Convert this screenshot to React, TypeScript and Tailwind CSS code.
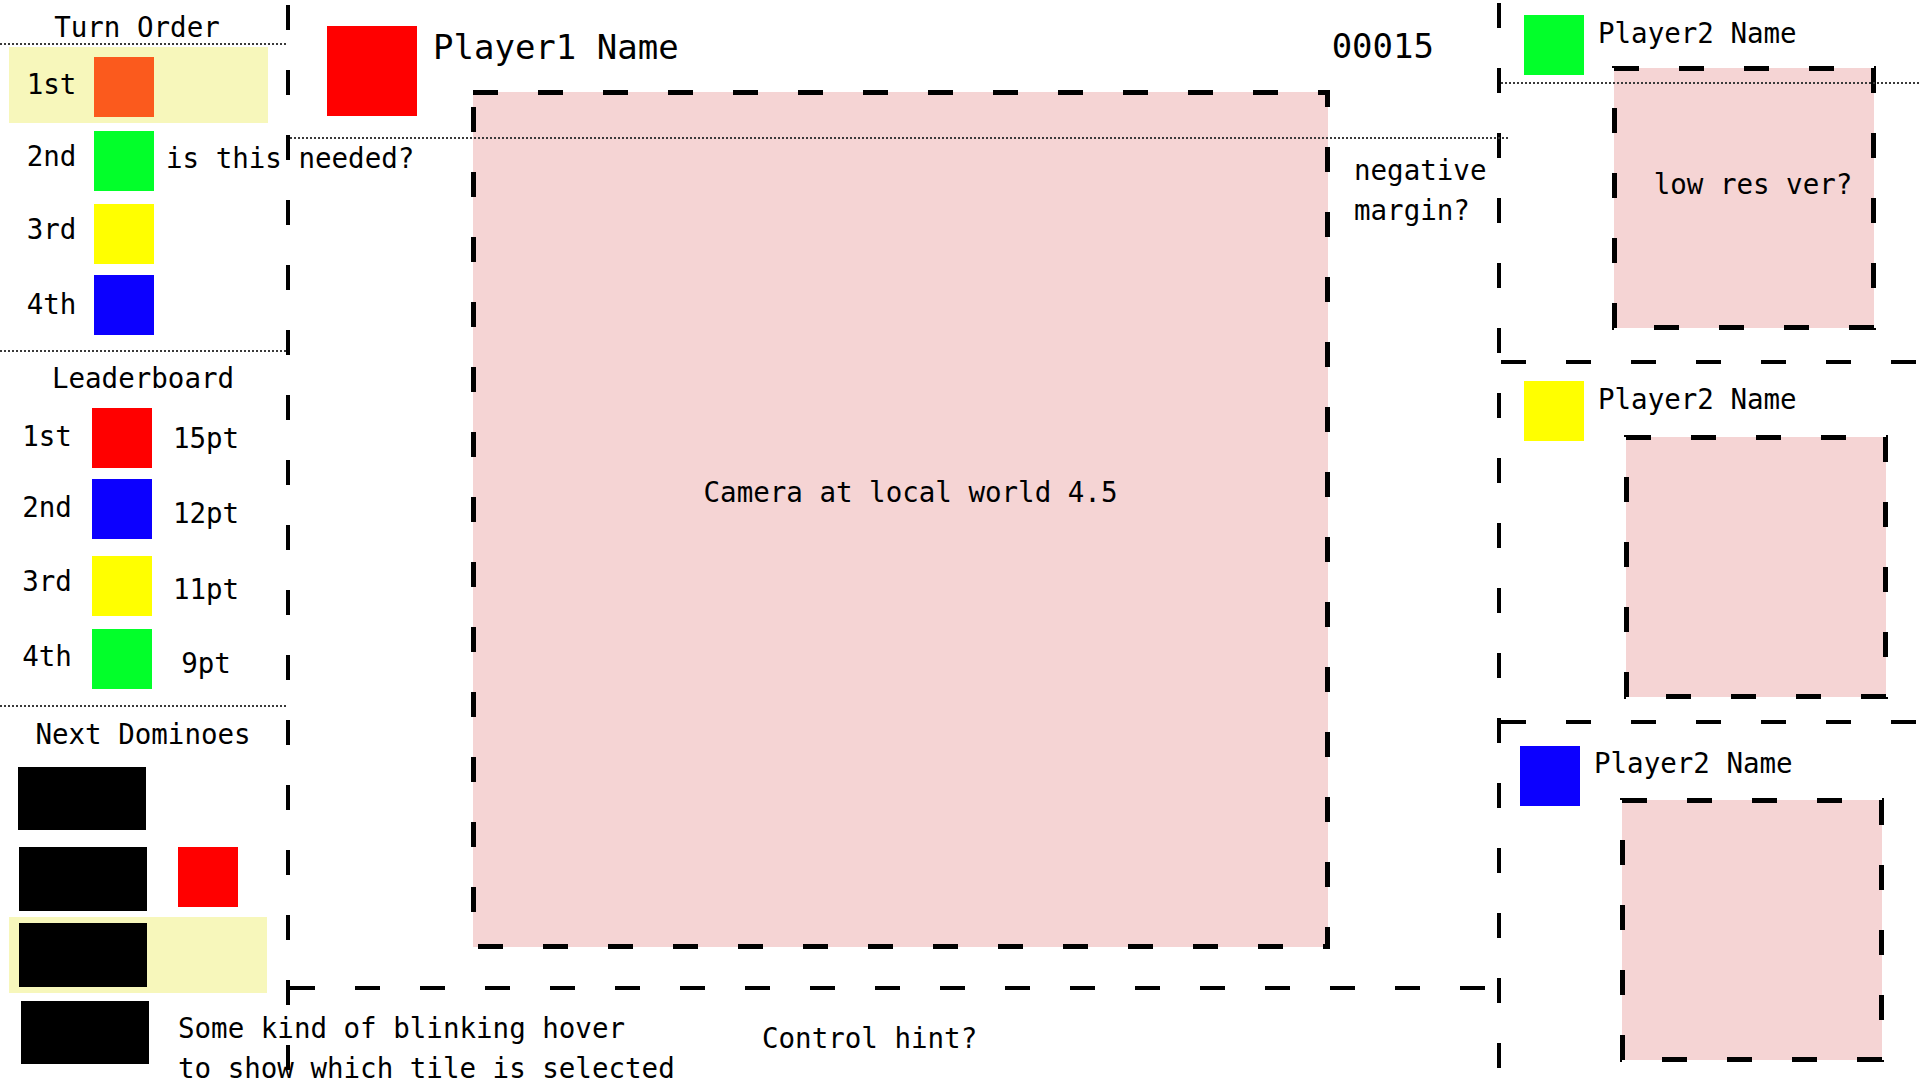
const DOTS =
    "h-[2px] [background:linear-gradient(90deg,#3a3a3a_2px,transparent_2px)_0_0/4px_2px_repeat-x]";

const MAIN_BOX =
    "w-[859px] h-[859px] shrink-0 border-2 border-transparent [background:linear-gradient(90deg,#000_25px,transparent_25px)_2px_0/65px_5px_repeat-x_border-box,linear-gradient(180deg,#000_25px,transparent_25px)_right_0_top_57px/5px_65px_repeat-y_border-box,linear-gradient(90deg,#000_25px,transparent_25px)_7px_100%/65px_5px_repeat-x_border-box,linear-gradient(180deg,#000_25px,transparent_25px)_0_17px/5px_65px_repeat-y_border-box,linear-gradient(#f5d4d4,#f5d4d4)_padding-box]";

const SMALL_BOX =
    "w-[264px] h-[264px] shrink-0 border-2 border-transparent [background:linear-gradient(90deg,#000_25px,transparent_25px)_2px_0/65px_5px_repeat-x_border-box,linear-gradient(180deg,#000_25px,transparent_25px)_right_0_top_2px/5px_65px_repeat-y_border-box,linear-gradient(90deg,#000_25px,transparent_25px)_42px_100%/65px_5px_repeat-x_border-box,linear-gradient(180deg,#000_25px,transparent_25px)_0_42px/5px_65px_repeat-y_border-box,linear-gradient(#f5d4d4,#f5d4d4)_padding-box]";

const H_DASH =
    "h-[4px] shrink-0 [background:linear-gradient(90deg,#000_25px,transparent_25px)_0_0/65px_4px_repeat-x]";

const TurnOrder = () => (
    <div className="flex flex-col">
        <div className="pt-[11px] pr-[12px] leading-[32px] text-center">Turn Order</div>
        <div className={DOTS} />

        <div className="mt-[2px] ml-[9px] w-[259px] h-[76px] bg-[#f7f7bb] flex items-start pt-[10px]">
            <span className="w-[85px] shrink-0 text-center mt-[7px]">1st</span>
            <div className="w-[60px] h-[60px] shrink-0 bg-[#fb5a1d]" />
        </div>

        <div className="mt-[8px] pl-[9px] flex items-start h-[60px]">
            <span className="w-[85px] shrink-0 text-center mt-[5px]">2nd</span>
            <div className="w-[60px] h-[60px] shrink-0 bg-[#02ff2a]" />
            <span className="ml-[12px] mt-[7px] shrink-0 whitespace-nowrap">
                is this needed?
            </span>
        </div>

        <div className="mt-[13px] pl-[9px] flex items-start h-[60px]">
            <span className="w-[85px] shrink-0 text-center mt-[5px]">3rd</span>
            <div className="w-[60px] h-[60px] shrink-0 bg-[#ffff00]" />
        </div>

        <div className="mt-[11px] pl-[9px] flex items-start h-[60px]">
            <span className="w-[85px] shrink-0 text-center mt-[9px]">4th</span>
            <div className="w-[60px] h-[60px] shrink-0 bg-[#0c00ff]" />
        </div>

        <div className={`mt-[15px] ${DOTS}`} />
    </div>
);

const Leaderboard = () => (
    <div className="flex flex-col">
        <div className="mt-[10px] leading-[32px] text-center">Leaderboard</div>

        <div className="mt-[14px] pl-[9px] flex items-start h-[60px]">
            <span className="w-[76px] shrink-0 text-center mt-[8px]">1st</span>
            <div className="ml-[7px] w-[60px] h-[60px] shrink-0 bg-[#ff0000]" />
            <span className="w-[108px] shrink-0 text-center mt-[10px]">15pt</span>
        </div>

        <div className="mt-[11px] pl-[9px] flex items-start h-[60px]">
            <span className="w-[76px] shrink-0 text-center mt-[8px]">2nd</span>
            <div className="ml-[7px] w-[60px] h-[60px] shrink-0 bg-[#0c00ff]" />
            <span className="w-[108px] shrink-0 text-center mt-[14px]">12pt</span>
        </div>

        <div className="mt-[17px] pl-[9px] flex items-start h-[60px]">
            <span className="w-[76px] shrink-0 text-center mt-[5px]">3rd</span>
            <div className="ml-[7px] w-[60px] h-[60px] shrink-0 bg-[#ffff00]" />
            <span className="w-[108px] shrink-0 text-center mt-[13px]">11pt</span>
        </div>

        <div className="mt-[13px] pl-[9px] flex items-start h-[60px]">
            <span className="w-[76px] shrink-0 text-center mt-[7px]">4th</span>
            <div className="ml-[7px] w-[60px] h-[60px] shrink-0 bg-[#02ff2a]" />
            <span className="w-[108px] shrink-0 text-center mt-[14px]">9pt</span>
        </div>

        <div className={`mt-[16px] ${DOTS}`} />
    </div>
);

const NextDominoes = () => (
    <div className="flex flex-col">
        <div className="mt-[11px] leading-[32px] text-center">Next Dominoes</div>

        <div className="mt-[17px] ml-[18px] w-[128px] h-[63px] bg-black" />

        <div className="mt-[17px] pl-[19px] flex items-start">
            <div className="w-[128px] h-[64px] shrink-0 bg-black" />
            <div className="ml-[31px] w-[60px] h-[60px] shrink-0 bg-[#ff0000]" />
        </div>

        <div className="mt-[6px] ml-[9px] w-[258px] h-[76px] bg-[#f7f7bb] pt-[6px] pl-[10px]">
            <div className="w-[128px] h-[64px] bg-black" />
        </div>

        <div className="mt-[8px] pl-[21px] flex items-start">
            <div className="w-[128px] h-[63px] bg-black shrink-0" />
            <div className="ml-[29px] mt-[7px] shrink-0 whitespace-nowrap">
                <div>Some kind of blinking hover</div>
                <div className="mt-[10px] leading-[20px]">to show which tile is selected</div>
            </div>
        </div>
    </div>
);

const PlayerPanel = ({
    color,
    className,
    headerClass,
    nameClass,
    boxClass,
    children,
}: {
    color: string;
    className: string;
    headerClass: string;
    nameClass: string;
    boxClass: string;
    children?: React.ReactNode;
}) => (
    <div className={className}>
        <div className={`flex items-start ${headerClass}`}>
            <div className={`w-[60px] h-[60px] shrink-0 ${color}`} />
            <span className={`whitespace-nowrap ${nameClass}`}>Player2 Name</span>
        </div>
        <div className={`${SMALL_BOX} ${boxClass}`}>{children}</div>
    </div>
);

export default function App() {
    return (
        <div className="relative w-[1920px] h-[1080px] overflow-hidden bg-white text-black flex font-['DejaVu_Sans_Mono',monospace] text-[27.5px] leading-[40px]">
            {/* left sidebar */}
            <div className="w-[286px] shrink-0 flex flex-col">
                <TurnOrder />
                <Leaderboard />
                <NextDominoes />
            </div>

            <div className="w-[4px] shrink-0 relative z-10 [background:linear-gradient(180deg,#000_25px,transparent_25px)_0_5px/4px_65px_repeat-y]" />

            {/* center */}
            <div className="w-[1207px] shrink-0 flex flex-col">
                <div className="flex items-start pt-[26px] pl-[37px] pr-[63px]">
                    <div className="w-[90px] h-[90px] bg-[#ff0000] shrink-0" />
                    <span className="ml-[16px] mt-[1px] text-[34px]">Player1 Name</span>
                    <span className="ml-auto text-[34px]">00015</span>
                </div>

                <div className="flex items-start -mt-[26px]">
                    <div className={`ml-[181px] flex justify-center items-start pt-[380px] pl-[20px] ${MAIN_BOX}`}>
                        <span className="whitespace-nowrap">Camera at local world 4.5</span>
                    </div>
                    <span className="ml-[24px] mt-[60px] whitespace-nowrap">
                        negative
                        <br />
                        margin?
                    </span>
                </div>

                <div className={`mt-[37px] ${H_DASH} [background-position:-3px_0]`} />

                <div className="pl-[472px] pt-[28px] whitespace-nowrap">Control hint?</div>
            </div>

            <div className="w-[4px] shrink-0 relative z-10 [background:linear-gradient(180deg,#000_25px,transparent_25px)_0_3px/4px_65px_repeat-y]" />

            {/* other players */}
            <div className="w-[419px] shrink-0 flex flex-col">
                <PlayerPanel
                    color="bg-[#02ff2a]"
                    className="h-[360px] shrink-0 pt-[15px]"
                    headerClass="pl-[23px]"
                    nameClass="ml-[14px] -mt-[2px]"
                    boxClass="ml-[111px] -mt-[9px] flex justify-center items-start pt-[96px] pl-[18px]"
                >
                    <span className="whitespace-nowrap">low res ver?</span>
                </PlayerPanel>

                <div className={H_DASH} />

                <PlayerPanel
                    color="bg-[#ffff00]"
                    className="h-[356px] shrink-0 pt-[17px]"
                    headerClass="pl-[23px]"
                    nameClass="ml-[14px] -mt-[2px]"
                    boxClass="ml-[123px] -mt-[6px]"
                />

                <div className={H_DASH} />

                <PlayerPanel
                    color="bg-[#0c00ff]"
                    className="flex-1 pt-[22px]"
                    headerClass="pl-[19px]"
                    nameClass="ml-[14px] -mt-[3px]"
                    boxClass="ml-[119px] -mt-[8px]"
                />
            </div>

            {/* dotted guides drawn over the boxes */}
            <div className={`absolute top-[137px] left-[290px] w-[1219px] z-20 ${DOTS}`} />
            <div className={`absolute top-[82px] left-[1501px] right-0 z-20 ${DOTS}`} />
        </div>
    );
}
